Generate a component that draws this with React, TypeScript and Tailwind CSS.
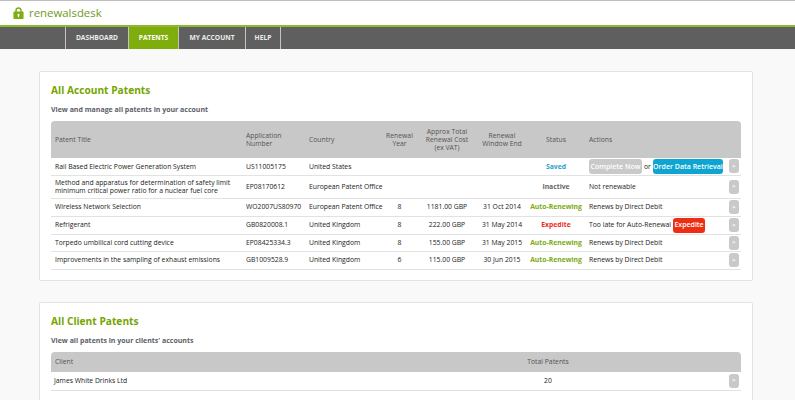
const navItems = [
  { label: 'DASHBOARD', width: 'w-[63px]', active: false },
  { label: 'PATENTS', width: 'w-[50px]', active: true },
  { label: 'MY ACCOUNT', width: 'w-[67px]', active: false },
  { label: 'HELP', width: 'w-[36px]', active: false },
];

type Patent = {
  title: string;
  number: string;
  country: string;
  year?: string;
  cost?: string;
  end?: string;
  status: string;
  statusClass: string;
  action: React.ReactNode;
  rowClass: string;
};

function Arrow() {
  return (
    <span className="absolute right-[2px] top-1/2 flex h-[14px] w-[10px] -translate-y-1/2 items-center justify-center rounded-[3px] bg-[#c9c9c9] text-[6px] font-bold text-white">
      &gt;
    </span>
  );
}

const patents: Patent[] = [
  {
    title: 'Rail Based Electric Power Generation System',
    number: 'US11005175',
    country: 'United States',
    status: 'Saved',
    statusClass: 'text-[#2a9fcb]',
    rowClass: 'h-[17px]',
    action: (
      <span className="flex items-center gap-[2px]">
        <span className="flex h-[15px] w-[53px] items-center justify-center rounded-[3px] bg-[#c9c9c9] text-[7px] font-semibold text-white">Complete Now</span>
        <span>or</span>
        <span className="flex h-[15px] w-[70px] items-center justify-center rounded-[3px] bg-[#0ea5d2] text-[7px] font-semibold text-white">Order Data Retrieval</span>
      </span>
    ),
  },
  {
    title: 'Method and apparatus for determination of safety limit minimum critical power ratio for a nuclear fuel core',
    number: 'EP08170612',
    country: 'European Patent Office',
    status: 'Inactive',
    statusClass: 'text-[#666666]',
    rowClass: 'h-[23px]',
    action: 'Not renewable',
  },
  {
    title: 'Wireless Network Selection',
    number: 'WO2007US80970',
    country: 'European Patent Office',
    year: '8',
    cost: '1181.00 GBP',
    end: '31 Oct 2014',
    status: 'Auto-Renewing',
    statusClass: 'text-[#7cab12]',
    rowClass: 'h-[18px]',
    action: 'Renews by Direct Debit',
  },
  {
    title: 'Refrigerant',
    number: 'GB0820008.1',
    country: 'United Kingdom',
    year: '8',
    cost: '222.00 GBP',
    end: '31 May 2014',
    status: 'Expedite',
    statusClass: 'text-[#ee2b1c]',
    rowClass: 'h-[18px]',
    action: (
      <span className="flex items-center gap-[2px]">
        <span>Too late for Auto-Renewal</span>
        <span className="flex h-[15px] w-[32px] items-center justify-center rounded-[3px] bg-[#ee2e12] text-[7px] font-semibold text-white">Expedite</span>
      </span>
    ),
  },
  {
    title: 'Torpedo umbilical cord cutting device',
    number: 'EP08425334.3',
    country: 'United Kingdom',
    year: '8',
    cost: '155.00 GBP',
    end: '31 May 2015',
    status: 'Auto-Renewing',
    statusClass: 'text-[#7cab12]',
    rowClass: 'h-[17px]',
    action: 'Renews by Direct Debit',
  },
  {
    title: 'Improvements in the sampling of exhaust emissions',
    number: 'GB1009528.9',
    country: 'United Kingdom',
    year: '6',
    cost: '115.00 GBP',
    end: '30 Jun 2015',
    status: 'Auto-Renewing',
    statusClass: 'text-[#7cab12]',
    rowClass: 'h-[18px]',
    action: 'Renews by Direct Debit',
  },
];

const th = 'px-[2px] font-normal leading-[8px]';

export default function App() {
  return (
    <div className="h-[400px] w-[795px] overflow-hidden bg-[#f9f9f9] font-['Open_Sans',sans-serif] text-[6.8px] text-[#222222]">
      <header className="flex h-[27px] items-center gap-[5px] border-t border-b-2 border-t-[#bdbdbd] border-b-[#8db92e] bg-white pl-[13px]">
        <svg width="11" height="12" viewBox="0 0 11 13" className="text-[#7fae14]">
          <path
            fill="currentColor"
            fillRule="evenodd"
            d="M2 5V3.600C2 1.600 3.500.3 5.500.3S9 1.600 9 3.600V5h1.200c.4 0 .8.4.8.8v6.300c0 .5-.4.9-.8.9H.8c-.4 0-.8-.4-.8-.9V5.800C0 5.400.4 5 .8 5H2Zm1.600 0h3.800V3.700c0-1.100-.8-1.900-1.900-1.900s-1.900.8-1.900 1.900V5Zm1.900 2.300a1.200 1.200 0 0 0-.6 2.200V11h1.200V9.500a1.200 1.200 0 0 0-.6-2.200Z"
          />
        </svg>
        <span className="text-[11.4px] font-medium leading-none text-[#6f9a22]">renewalsdesk</span>
      </header>

      <nav className="flex h-[22px] bg-[#5f5f5f] pl-[65px]">
        {navItems.map((item) => (
          <a
            key={item.label}
            className={`flex items-center justify-center border-l border-[#c4c4c4] text-[6.7px] font-bold last:border-r ${item.width} ${
              item.active ? 'bg-[#7fae0c] text-white' : 'text-[#ececec]'
            }`}
          >
            {item.label}
          </a>
        ))}
      </nav>

      <main className="ml-[39px] flex w-[714px] flex-col gap-[21px] pt-[22px]">
        <section className="h-[210px] rounded-[2px] border border-[#e3e3e3] bg-white px-[11px]">
          <h2 className="pt-[10px] text-[10.200px] font-bold leading-[16px] text-[#76a500]">All Account Patents</h2>
          <p className="pt-[6px] text-[7px] font-bold leading-[12px] text-[#5c6068]">View and manage all patents in your account</p>
          <table className="mt-[5px] w-[690px] table-fixed border-collapse">
            <colgroup>
              <col className="w-[192px]" />
              <col className="w-[63px]" />
              <col className="w-[77px]" />
              <col className="w-[33px]" />
              <col className="w-[62px]" />
              <col className="w-[48px]" />
              <col className="w-[60px]" />
              <col className="w-[155px]" />
            </colgroup>
            <thead>
              <tr className="h-[37px] bg-[#c8c8c8] text-[#555555]">
                <th className={`${th} rounded-tl-[4px] pl-[4px] text-left`}>Patent Title</th>
                <th className={`${th} pl-[3px] text-left`}>Application Number</th>
                <th className={`${th} pl-[3px] text-left`}>Country</th>
                <th className={`${th} text-center`}>Renewal Year</th>
                <th className={`${th} px-[6px] text-center`}>Approx Total Renewal Cost (ex VAT)</th>
                <th className={`${th} text-center`}>Renewal Window End</th>
                <th className={`${th} text-center`}>Status</th>
                <th className={`${th} rounded-tr-[4px] pl-[3px] text-left`}>Actions</th>
              </tr>
            </thead>
            <tbody>
              {patents.map((p) => (
                <tr key={p.number} className={`border-b border-[#e2e2e2] ${p.rowClass}`}>
                  <td className="pt-px pr-[3px] pl-[4px] leading-[8.500px]">{p.title}</td>
                  <td className="px-[3px] pt-px whitespace-nowrap">{p.number}</td>
                  <td className="px-[3px] pt-px whitespace-nowrap">{p.country}</td>
                  <td className="pt-px text-center">{p.year}</td>
                  <td className="pt-px text-center">{p.cost}</td>
                  <td className="pt-px text-center whitespace-nowrap">{p.end}</td>
                  <td className={`pt-px text-center font-bold whitespace-nowrap ${p.statusClass}`}>{p.status}</td>
                  <td className="relative px-[3px] pt-px whitespace-nowrap">
                    {p.action}
                    <Arrow />
                  </td>
                </tr>
              ))}
            </tbody>
          </table>
        </section>

        <section className="h-[120px] rounded-[2px] border border-[#e3e3e3] bg-white px-[11px]">
          <h2 className="pt-[10px] text-[10.200px] font-bold leading-[16px] text-[#76a500]">All Client Patents</h2>
          <p className="pt-[6px] text-[7px] font-bold leading-[12px] text-[#5c6068]">View all patents in your clients' accounts</p>
          <table className="mt-[5px] w-[690px] table-fixed border-collapse">
            <colgroup>
              <col className="w-[457px]" />
              <col className="w-[80px]" />
              <col className="w-[153px]" />
            </colgroup>
            <thead>
              <tr className="h-[20px] bg-[#c8c8c8] text-[#555555]">
                <th className={`${th} rounded-tl-[4px] pl-[4px] text-left`}>Client</th>
                <th className={`${th} text-center`}>Total Patents</th>
                <th className={`${th} rounded-tr-[4px]`}></th>
              </tr>
            </thead>
            <tbody>
              <tr className="h-[18px] border-b border-[#e2e2e2]">
                <td className="pl-[3px]">James White Drinks Ltd</td>
                <td className="text-center">20</td>
                <td className="relative">
                  <Arrow />
                </td>
              </tr>
            </tbody>
          </table>
        </section>
      </main>
    </div>
  );
}
